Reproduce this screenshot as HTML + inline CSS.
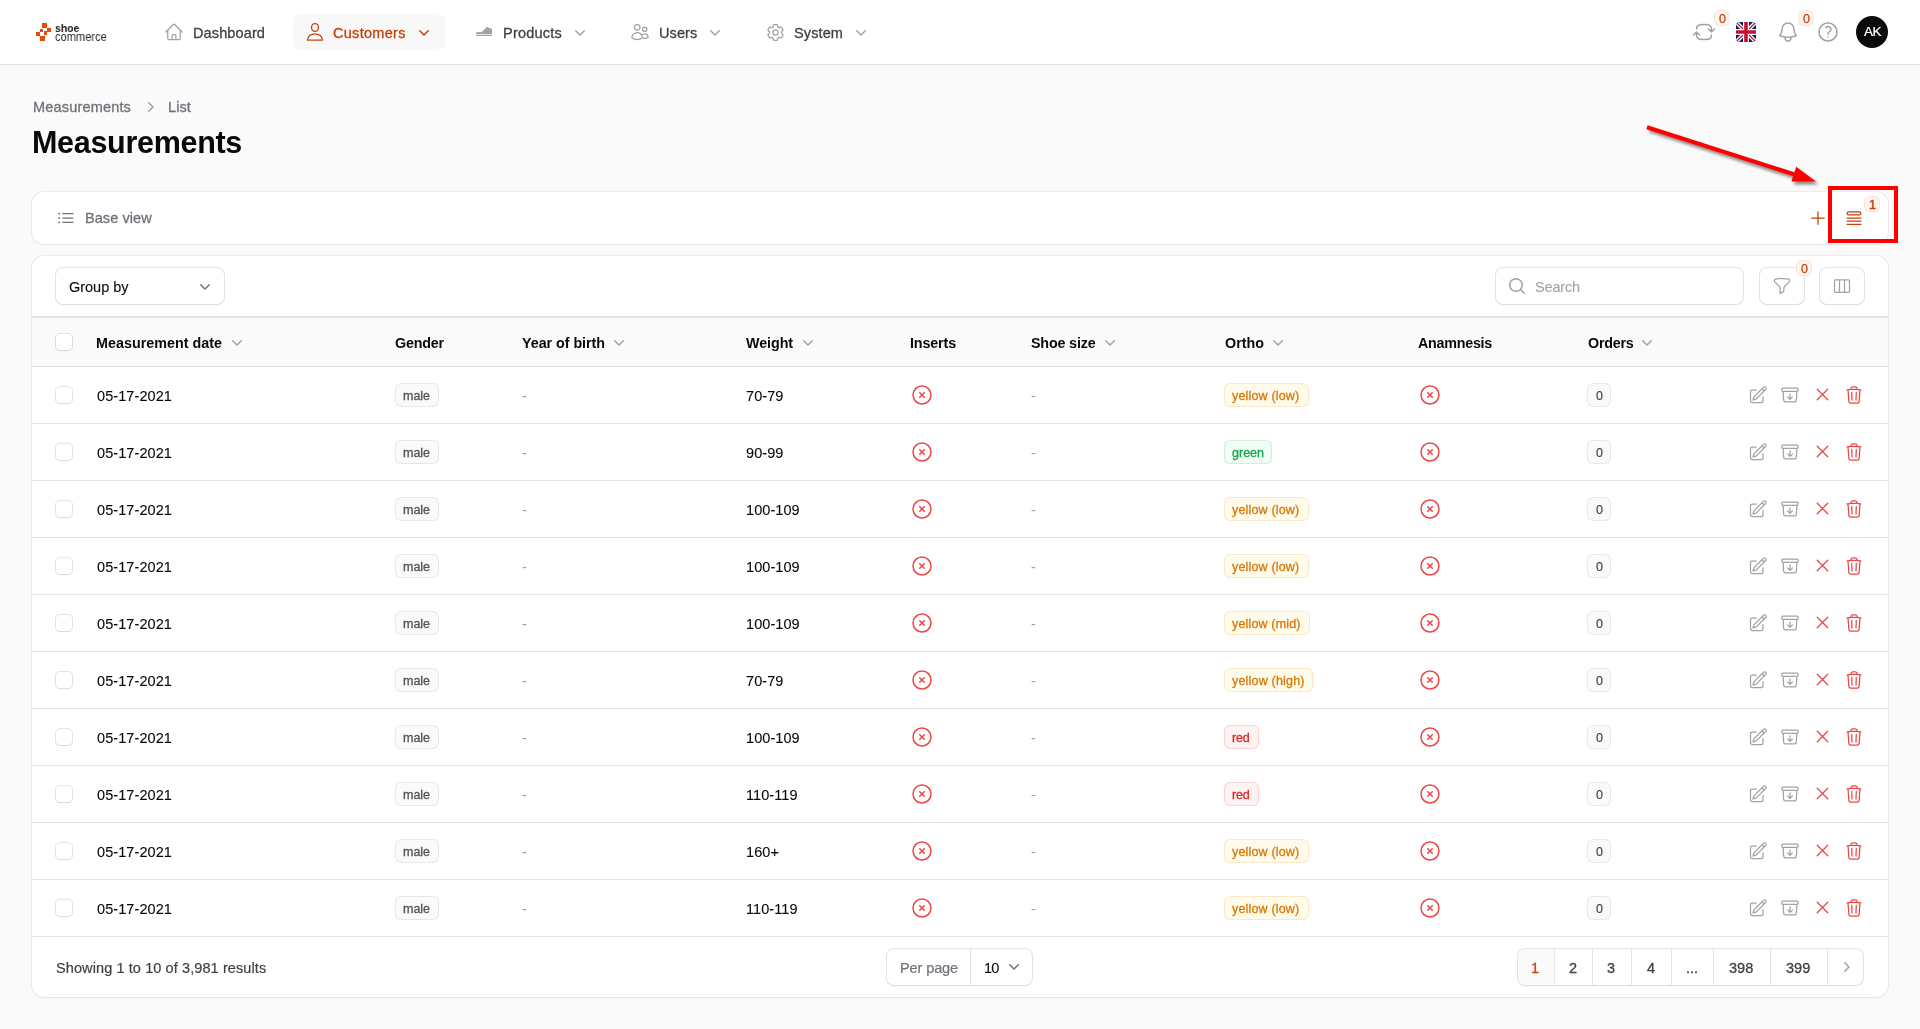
<!DOCTYPE html>
<html><head><meta charset="utf-8"><title>Measurements</title>
<style>
html,body{margin:0;padding:0;}
body{width:1920px;height:1029px;overflow:hidden;background:#fafafa;position:relative;font-family:"Liberation Sans",sans-serif;}
.t{position:absolute;white-space:nowrap;line-height:1;will-change:transform;}
svg{overflow:visible}
</style></head><body>
<div style="position:absolute;left:0px;top:0px;width:1920px;height:64px;background:#fff;"></div>
<div style="position:absolute;left:0px;top:64px;width:1920px;height:1px;background:#e3e3e4;"></div>
<div style="position:absolute;left:0px;top:65px;width:1920px;height:2px;background:linear-gradient(rgba(0,0,0,0.025),rgba(0,0,0,0));"></div>
<div style="position:absolute;left:42.2px;top:23.0px;width:4.9px;height:4.7px;background:#e64b0e"></div>
<div style="position:absolute;left:47.0px;top:27.7px;width:3.9px;height:4.1px;background:#e64b0e"></div>
<div style="position:absolute;left:39.8px;top:29.0px;width:3.0px;height:3.0px;background:#e64b0e"></div>
<div style="position:absolute;left:44.1px;top:31.4px;width:2.9px;height:3.3px;background:#e64b0e"></div>
<div style="position:absolute;left:36.0px;top:31.9px;width:3.9px;height:4.0px;background:#e64b0e"></div>
<div style="position:absolute;left:39.9px;top:35.9px;width:4.9px;height:4.7px;background:#e64b0e"></div>
<div class="t" style="left:55.30px;top:22.08px;font-size:11.6px;font-weight:700;color:#151515;transform:scaleX(0.9013);transform-origin:0 0;">shoe</div>
<div class="t" style="left:55.30px;top:30.00px;font-size:13px;color:#2a2a2a;transform:scaleX(0.8521);transform-origin:0 0;">commerce</div>
<svg style="position:absolute;left:163.5px;top:22px" width="20" height="20" viewBox="0 0 24 24" fill="none" stroke="#a1a1aa" stroke-width="1.5" stroke-linecap="round" stroke-linejoin="round"><path d="m2.25 12 8.954-8.955c.44-.439 1.152-.439 1.591 0L21.75 12M4.5 9.75v10.125c0 .621.504 1.125 1.125 1.125H9.75v-4.875c0-.621.504-1.125 1.125-1.125h2.25c.621 0 1.125.504 1.125 1.125V21h4.125c.621 0 1.125-.504 1.125-1.125V9.75M8.25 21h8.25"/></svg>
<div class="t" style="left:192.50px;top:26.33px;font-size:14.5px;-webkit-text-stroke:0.3px #3f3f46;color:#3f3f46;letter-spacing:0.119px;">Dashboard</div>
<div style="position:absolute;left:293px;top:14px;width:153px;height:36px;background:#f8f8f9;border-radius:8px;"></div>
<svg style="position:absolute;left:300px;top:18px" width="30" height="28" viewBox="300 18 30 28" fill="none" stroke="#c5410c" stroke-width="1.3" stroke-linejoin="round"><ellipse cx="315" cy="27.5" rx="3.45" ry="3.95"/><path d="M307.5 40.2C307.5 36.4 311 33.8 315 33.8S322.5 36.4 322.5 40.2Z"/></svg>
<div class="t" style="left:333.30px;top:26.33px;font-size:14.5px;-webkit-text-stroke:0.3px #c5410c;color:#c5410c;letter-spacing:0.289px;">Customers</div>
<svg style="position:absolute;left:414px;top:21.5px" width="20" height="20" viewBox="0 0 20 20" fill="#c5410c"><path fill-rule="evenodd" clip-rule="evenodd" d="M5.22 8.22a.75.75 0 0 1 1.06 0L10 11.94l3.72-3.72a.75.75 0 1 1 1.06 1.06l-4.25 4.25a.75.75 0 0 1-1.06 0L5.22 9.28a.75.75 0 0 1 0-1.06Z"/></svg>
<svg style="position:absolute;left:470px;top:18px" width="30" height="28" viewBox="470 18 30 28"><path d="M476 33.6C475.9 32.8 476.6 32.1 477.8 32 479.2 31.9 480.1 32.5 481 32.3 482.4 31.2 484.6 29 486.1 27.2 486.3 27 486.6 27 486.9 27.1L491.5 28.7C491.8 28.8 492 29.1 492 29.4V34.1H476Z" fill="#a1a1aa"/><path d="M481.6 30.6l1 1M483.1 29.2l1 1M484.6 27.8l1 1" stroke="#fff" stroke-width=".7"/><rect x="476" y="34.7" width="16" height="1.4" rx=".5" fill="#a1a1aa"/></svg>
<div class="t" style="left:502.80px;top:26.33px;font-size:14.5px;-webkit-text-stroke:0.3px #3f3f46;color:#3f3f46;letter-spacing:0.223px;">Products</div>
<svg style="position:absolute;left:570.4px;top:21.5px" width="20" height="20" viewBox="0 0 20 20" fill="#a1a1aa"><path fill-rule="evenodd" clip-rule="evenodd" d="M5.22 8.22a.75.75 0 0 1 1.06 0L10 11.94l3.72-3.72a.75.75 0 1 1 1.06 1.06l-4.25 4.25a.75.75 0 0 1-1.06 0L5.22 9.28a.75.75 0 0 1 0-1.06Z"/></svg>
<svg style="position:absolute;left:630px;top:22px" width="20" height="20" viewBox="0 0 24 24" fill="none" stroke="#a1a1aa" stroke-width="1.5" stroke-linecap="round" stroke-linejoin="round"><path d="M15 19.128a9.38 9.38 0 0 0 2.625.372 9.337 9.337 0 0 0 4.121-.952 4.125 4.125 0 0 0-7.533-2.493M15 19.128v-.003c0-1.113-.285-2.16-.786-3.07M15 19.128v.106A12.318 12.318 0 0 1 8.624 21c-2.331 0-4.512-.645-6.374-1.766l-.001-.109a6.375 6.375 0 0 1 11.964-3.07M12 6.375a3.375 3.375 0 1 1-6.75 0 3.375 3.375 0 0 1 6.75 0Zm8.25 2.25a2.625 2.625 0 1 1-5.25 0 2.625 2.625 0 0 1 5.25 0Z"/></svg>
<div class="t" style="left:658.50px;top:26.33px;font-size:14.5px;-webkit-text-stroke:0.3px #3f3f46;color:#3f3f46;letter-spacing:0.087px;">Users</div>
<svg style="position:absolute;left:705px;top:21.5px" width="20" height="20" viewBox="0 0 20 20" fill="#a1a1aa"><path fill-rule="evenodd" clip-rule="evenodd" d="M5.22 8.22a.75.75 0 0 1 1.06 0L10 11.94l3.72-3.72a.75.75 0 1 1 1.06 1.06l-4.25 4.25a.75.75 0 0 1-1.06 0L5.22 9.28a.75.75 0 0 1 0-1.06Z"/></svg>
<svg style="position:absolute;left:764.5px;top:22px" width="21" height="21" viewBox="0 0 24 24" fill="none" stroke="#a1a1aa" stroke-width="1.45" stroke-linecap="round" stroke-linejoin="round"><path d="M9.594 3.94c.09-.542.56-.94 1.11-.94h2.593c.55 0 1.02.398 1.11.94l.213 1.281c.063.374.313.686.645.87.074.04.147.083.22.127.325.196.72.257 1.075.124l1.217-.456a1.125 1.125 0 0 1 1.37.49l1.296 2.247a1.125 1.125 0 0 1-.26 1.431l-1.003.827c-.293.241-.438.613-.43.992a7.723 7.723 0 0 1 0 .255c-.008.378.137.75.43.991l1.004.827c.424.35.534.955.26 1.43l-1.298 2.247a1.125 1.125 0 0 1-1.369.491l-1.217-.456c-.355-.133-.75-.072-1.076.124a6.47 6.47 0 0 1-.22.128c-.331.183-.581.495-.644.869l-.213 1.281c-.09.543-.56.94-1.11.94h-2.594c-.55 0-1.019-.398-1.11-.94l-.213-1.281c-.062-.374-.312-.686-.644-.87a6.52 6.52 0 0 1-.22-.127c-.325-.196-.72-.257-1.076-.124l-1.217.456a1.125 1.125 0 0 1-1.369-.49l-1.297-2.247a1.125 1.125 0 0 1 .26-1.431l1.004-.827c.292-.24.437-.613.43-.991a6.932 6.932 0 0 1 0-.255c.007-.38-.138-.751-.43-.992l-1.004-.827a1.125 1.125 0 0 1-.26-1.43l1.297-2.247a1.125 1.125 0 0 1 1.37-.491l1.216.456c.356.133.751.072 1.076-.124.072-.044.146-.086.22-.128.332-.183.582-.495.644-.869l.214-1.28Z M15 12a3 3 0 1 1-6 0 3 3 0 0 1 6 0Z"/></svg>
<div class="t" style="left:793.90px;top:26.33px;font-size:14.5px;-webkit-text-stroke:0.3px #3f3f46;color:#3f3f46;letter-spacing:0.110px;">System</div>
<svg style="position:absolute;left:850.7px;top:21.5px" width="20" height="20" viewBox="0 0 20 20" fill="#a1a1aa"><path fill-rule="evenodd" clip-rule="evenodd" d="M5.22 8.22a.75.75 0 0 1 1.06 0L10 11.94l3.72-3.72a.75.75 0 1 1 1.06 1.06l-4.25 4.25a.75.75 0 0 1-1.06 0L5.22 9.28a.75.75 0 0 1 0-1.06Z"/></svg>
<svg style="position:absolute;left:1692px;top:20px" width="24" height="24" viewBox="0 0 24 24" fill="none" stroke="#a1a1aa" stroke-width="1.5" stroke-linecap="round" stroke-linejoin="round"><path d="M19.5 12c0-1.232-.046-2.453-.138-3.662a4.006 4.006 0 0 0-3.7-3.7 48.678 48.678 0 0 0-7.324 0 4.006 4.006 0 0 0-3.7 3.7c-.017.22-.032.441-.046.662M19.5 12l3-3m-3 3-3-3m-12 3c0 1.232.046 2.453.138 3.662a4.006 4.006 0 0 0 3.7 3.7 48.656 48.656 0 0 0 7.324 0 4.006 4.006 0 0 0 3.7-3.7c.017-.22.032-.441.046-.662M4.5 12l3 3m-3-3-3 3"/></svg>
<div style="position:absolute;left:1714px;top:10px;width:16px;height:16px;background:#fff5ee;border-radius:6px;box-shadow:inset 0 0 0 1px rgba(197,65,12,0.10);"></div>
<div class="t" style="left:1718.52px;top:13.22px;font-size:12.5px;-webkit-text-stroke:0.25px #c5410c;color:#c5410c;">0</div>
<svg style="position:absolute;left:1736px;top:22px" width="20" height="20" viewBox="0 0 20 20"><defs><clipPath id="fc"><rect width="20" height="20" rx="4"/></clipPath></defs><g clip-path="url(#fc)"><rect width="20" height="20" fill="#012169"/><path d="M0 0L20 20M20 0L0 20" stroke="#fff" stroke-width="4"/><path d="M0 0L20 20M20 0L0 20" stroke="#C8102E" stroke-width="1.3"/><path d="M10 0V20M0 10H20" stroke="#fff" stroke-width="6"/><path d="M10 0V20M0 10H20" stroke="#C8102E" stroke-width="3.6"/></g></svg>
<svg style="position:absolute;left:1776px;top:20px" width="24" height="24" viewBox="0 0 24 24" fill="none" stroke="#a1a1aa" stroke-width="1.5" stroke-linecap="round" stroke-linejoin="round"><path d="M14.857 17.082a23.848 23.848 0 0 0 5.454-1.31A8.967 8.967 0 0 1 18 9.75V9A6 6 0 0 0 6 9v.75a8.967 8.967 0 0 1-2.312 6.022c1.733.64 3.56 1.085 5.455 1.31m5.714 0a24.255 24.255 0 0 1-5.714 0m5.714 0a3 3 0 1 1-5.714 0"/></svg>
<div style="position:absolute;left:1798px;top:10px;width:16px;height:16px;background:#fff5ee;border-radius:6px;box-shadow:inset 0 0 0 1px rgba(197,65,12,0.10);"></div>
<div class="t" style="left:1802.52px;top:13.22px;font-size:12.5px;-webkit-text-stroke:0.25px #c5410c;color:#c5410c;">0</div>
<svg style="position:absolute;left:1816px;top:20px" width="24" height="24" viewBox="0 0 24 24" fill="none" stroke="#a1a1aa" stroke-width="1.5" stroke-linecap="round" stroke-linejoin="round"><path d="M9.879 7.519c1.171-1.025 3.071-1.025 4.242 0 1.172 1.025 1.172 2.687 0 3.712-.203.179-.43.326-.67.442-.745.361-1.45.999-1.45 1.827v.75M21 12a9 9 0 1 1-18 0 9 9 0 0 1 18 0Zm-9 5.25h.008v.008H12v-.008Z"/></svg>
<div style="position:absolute;left:1856px;top:16px;width:32px;height:32px;background:#0b0b0d;border-radius:50%;"></div>
<div class="t" style="left:1864.00px;top:25.37px;font-size:13.5px;-webkit-text-stroke:0.2px #fff;color:#fff;letter-spacing:-0.505px;">AK</div>
<div class="t" style="left:32.80px;top:99.63px;font-size:14.5px;-webkit-text-stroke:0.3px #71717a;color:#71717a;letter-spacing:0.176px;">Measurements</div>
<svg style="position:absolute;left:140px;top:96.5px" width="20" height="20" viewBox="0 0 20 20" fill="#a1a1aa"><path fill-rule="evenodd" clip-rule="evenodd" d="M8.22 5.22a.75.75 0 0 1 1.06 0l4.25 4.25a.75.75 0 0 1 0 1.06l-4.25 4.25a.75.75 0 0 1-1.06-1.06L11.94 10 8.22 6.28a.75.75 0 0 1 0-1.06Z"/></svg>
<div class="t" style="left:168.00px;top:99.63px;font-size:14.5px;-webkit-text-stroke:0.3px #71717a;color:#71717a;letter-spacing:0.109px;">List</div>
<div class="t" style="left:32.20px;top:127.08px;font-size:30.5px;font-weight:700;color:#09090b;letter-spacing:-0.298px;">Measurements</div>
<div style="position:absolute;left:32px;top:192px;width:1856px;height:52px;background:#fff;border-radius:12px;box-shadow:0 0 0 1px rgba(9,9,11,0.06),0 1px 2px rgba(0,0,0,0.04);"></div>
<svg style="position:absolute;left:56px;top:208px" width="20" height="20" viewBox="0 0 24 24" fill="none" stroke="#71717a" stroke-width="1.5" stroke-linecap="round" stroke-linejoin="round"><path d="M8.25 6.75h12M8.25 12h12m-12 5.25h12M3.75 6.75h.007v.008H3.75V6.75Zm.375 0a.375.375 0 1 1-.75 0 .375.375 0 0 1 .75 0ZM3.75 12h.007v.008H3.75V12Zm.375 0a.375.375 0 1 1-.75 0 .375.375 0 0 1 .75 0Zm-.375 5.25h.007v.008H3.75v-.008Zm.375 0a.375.375 0 1 1-.75 0 .375.375 0 0 1 .75 0Z"/></svg>
<div class="t" style="left:84.60px;top:211.48px;font-size:14.5px;-webkit-text-stroke:0.3px #71717a;color:#71717a;letter-spacing:0.068px;">Base view</div>
<svg style="position:absolute;left:1808px;top:208px" width="20" height="20" viewBox="0 0 24 24" fill="none" stroke="#c5410c" stroke-width="1.5" stroke-linecap="round" stroke-linejoin="round"><path d="M12 4.5v15m7.5-7.5h-15"/></svg>
<svg style="position:absolute;left:1844px;top:208px" width="20" height="20" viewBox="0 0 24 24" fill="none" stroke="#c5410c" stroke-width="1.5" stroke-linecap="round" stroke-linejoin="round"><path d="M3.75 12h16.5m-16.5 3.75h16.5M3.75 19.5h16.5M5.625 4.5h12.75a1.875 1.875 0 0 1 0 3.75H5.625a1.875 1.875 0 0 1 0-3.75Z"/></svg>
<div style="position:absolute;left:1864px;top:196px;width:16px;height:16px;background:#fff5ee;border-radius:6px;box-shadow:inset 0 0 0 1px rgba(197,65,12,0.10);"></div>
<div class="t" style="left:1868.52px;top:199.22px;font-size:12.5px;-webkit-text-stroke:0.45px #c5410c;color:#c5410c;">1</div>
<div style="position:absolute;left:32px;top:256px;width:1856px;height:741px;background:#fff;border-radius:12px;box-shadow:0 0 0 1px rgba(9,9,11,0.06),0 1px 2px rgba(0,0,0,0.04);overflow:hidden;"></div>
<div style="position:absolute;left:56px;top:268px;width:168px;height:36px;border-radius:7px;background:#fff;box-shadow:0 0 0 1px rgba(9,9,11,0.10),0 1px 2px rgba(0,0,0,0.05);"></div>
<div class="t" style="left:68.60px;top:280.03px;font-size:14.5px;-webkit-text-stroke:0.1px #09090b;color:#09090b;letter-spacing:-0.017px;">Group by</div>
<svg style="position:absolute;left:195px;top:275.5px" width="20" height="20" viewBox="0 0 20 20" fill="#71717a"><path fill-rule="evenodd" clip-rule="evenodd" d="M5.22 8.22a.75.75 0 0 1 1.06 0L10 11.94l3.72-3.72a.75.75 0 1 1 1.06 1.06l-4.25 4.25a.75.75 0 0 1-1.06 0L5.22 9.28a.75.75 0 0 1 0-1.06Z"/></svg>
<div style="position:absolute;left:1496px;top:268px;width:247px;height:36px;border-radius:7px;background:#fff;box-shadow:0 0 0 1px rgba(9,9,11,0.10),0 1px 2px rgba(0,0,0,0.05);"></div>
<svg style="position:absolute;left:1507px;top:276px" width="20" height="20" viewBox="0 0 20 20" fill="#a1a1aa"><path fill-rule="evenodd" clip-rule="evenodd" d="M9 3.5a5.5 5.5 0 1 0 0 11 5.5 5.5 0 0 0 0-11ZM2 9a7 7 0 1 1 12.452 4.391l3.328 3.329a.75.75 0 1 1-1.06 1.06l-3.329-3.328A7 7 0 0 1 2 9Z"/></svg>
<div class="t" style="left:1535.20px;top:280.03px;font-size:14.5px;-webkit-text-stroke:0.1px #a1a1aa;color:#a1a1aa;letter-spacing:-0.157px;">Search</div>
<div style="position:absolute;left:1760px;top:268px;width:44px;height:36px;border-radius:7px;background:#fff;box-shadow:0 0 0 1px rgba(9,9,11,0.10),0 1px 2px rgba(0,0,0,0.05);"></div>
<svg style="position:absolute;left:1772px;top:276px" width="20" height="20" viewBox="0 0 24 24" fill="none" stroke="#a1a1aa" stroke-width="1.5" stroke-linecap="round" stroke-linejoin="round"><path d="M12 3c2.755 0 5.455.232 8.083.678.533.09.917.556.917 1.096v1.044a2.25 2.25 0 0 1-.659 1.591l-5.432 5.432a2.25 2.25 0 0 0-.659 1.591v2.927a2.25 2.25 0 0 1-1.244 2.013L9.75 21v-6.568a2.25 2.25 0 0 0-.659-1.591L3.659 7.409A2.25 2.25 0 0 1 3 5.818V4.774c0-.54.384-1.006.917-1.096A48.32 48.32 0 0 1 12 3Z"/></svg>
<div style="position:absolute;left:1796px;top:260px;width:16px;height:16px;background:#fff5ee;border-radius:6px;box-shadow:inset 0 0 0 1px rgba(197,65,12,0.10);"></div>
<div class="t" style="left:1800.52px;top:263.22px;font-size:12.5px;-webkit-text-stroke:0.25px #c5410c;color:#c5410c;">0</div>
<div style="position:absolute;left:1820px;top:268px;width:44px;height:36px;border-radius:7px;background:#fff;box-shadow:0 0 0 1px rgba(9,9,11,0.10),0 1px 2px rgba(0,0,0,0.05);"></div>
<svg style="position:absolute;left:1832px;top:276px" width="20" height="20" viewBox="0 0 24 24" fill="none" stroke="#a1a1aa" stroke-width="1.5" stroke-linecap="round" stroke-linejoin="round"><path d="M9 4.5v15m6-15v15m-10.875 0h15.75c.621 0 1.125-.504 1.125-1.125V5.625c0-.621-.504-1.125-1.125-1.125H4.125C3.504 4.5 3 5.004 3 5.625v12.75c0 .621.504 1.125 1.125 1.125Z"/></svg>
<div style="position:absolute;left:32px;top:316px;width:1856px;height:2px;background:#e4e4e7;"></div>
<div style="position:absolute;left:32px;top:318px;width:1856px;height:48px;background:#fafafa;"></div>
<div style="position:absolute;left:32px;top:366px;width:1856px;height:1px;background:#e4e4e7;"></div>
<div style="position:absolute;left:56px;top:334px;width:16px;height:16px;border-radius:4px;background:#fff;box-shadow:0 0 0 1px rgba(9,9,11,0.11),0 1px 2px rgba(0,0,0,0.05);"></div>
<div class="t" style="left:96.40px;top:335.80px;font-size:14.3px;font-weight:700;color:#09090b;letter-spacing:0.028px;">Measurement date</div>
<svg style="position:absolute;left:226.6px;top:331.7px" width="20" height="20" viewBox="0 0 20 20" fill="#a1a1aa"><path fill-rule="evenodd" clip-rule="evenodd" d="M5.22 8.22a.75.75 0 0 1 1.06 0L10 11.94l3.72-3.72a.75.75 0 1 1 1.06 1.06l-4.25 4.25a.75.75 0 0 1-1.06 0L5.22 9.28a.75.75 0 0 1 0-1.06Z"/></svg>
<div class="t" style="left:395.20px;top:335.80px;font-size:14.3px;font-weight:700;color:#09090b;letter-spacing:-0.177px;">Gender</div>
<div class="t" style="left:521.80px;top:335.80px;font-size:14.3px;font-weight:700;color:#09090b;letter-spacing:-0.033px;">Year of birth</div>
<svg style="position:absolute;left:609.4px;top:331.7px" width="20" height="20" viewBox="0 0 20 20" fill="#a1a1aa"><path fill-rule="evenodd" clip-rule="evenodd" d="M5.22 8.22a.75.75 0 0 1 1.06 0L10 11.94l3.72-3.72a.75.75 0 1 1 1.06 1.06l-4.25 4.25a.75.75 0 0 1-1.06 0L5.22 9.28a.75.75 0 0 1 0-1.06Z"/></svg>
<div class="t" style="left:746.30px;top:335.80px;font-size:14.3px;font-weight:700;color:#09090b;letter-spacing:-0.066px;">Weight</div>
<svg style="position:absolute;left:798px;top:331.7px" width="20" height="20" viewBox="0 0 20 20" fill="#a1a1aa"><path fill-rule="evenodd" clip-rule="evenodd" d="M5.22 8.22a.75.75 0 0 1 1.06 0L10 11.94l3.72-3.72a.75.75 0 1 1 1.06 1.06l-4.25 4.25a.75.75 0 0 1-1.06 0L5.22 9.28a.75.75 0 0 1 0-1.06Z"/></svg>
<div class="t" style="left:909.80px;top:335.80px;font-size:14.3px;font-weight:700;color:#09090b;letter-spacing:-0.127px;">Inserts</div>
<div class="t" style="left:1031.20px;top:335.80px;font-size:14.3px;font-weight:700;color:#09090b;letter-spacing:-0.162px;">Shoe size</div>
<svg style="position:absolute;left:1100px;top:331.7px" width="20" height="20" viewBox="0 0 20 20" fill="#a1a1aa"><path fill-rule="evenodd" clip-rule="evenodd" d="M5.22 8.22a.75.75 0 0 1 1.06 0L10 11.94l3.72-3.72a.75.75 0 1 1 1.06 1.06l-4.25 4.25a.75.75 0 0 1-1.06 0L5.22 9.28a.75.75 0 0 1 0-1.06Z"/></svg>
<div class="t" style="left:1224.60px;top:335.80px;font-size:14.3px;font-weight:700;color:#09090b;letter-spacing:0.016px;">Ortho</div>
<svg style="position:absolute;left:1267.6px;top:331.7px" width="20" height="20" viewBox="0 0 20 20" fill="#a1a1aa"><path fill-rule="evenodd" clip-rule="evenodd" d="M5.22 8.22a.75.75 0 0 1 1.06 0L10 11.94l3.72-3.72a.75.75 0 1 1 1.06 1.06l-4.25 4.25a.75.75 0 0 1-1.06 0L5.22 9.28a.75.75 0 0 1 0-1.06Z"/></svg>
<div class="t" style="left:1418.40px;top:335.80px;font-size:14.3px;font-weight:700;color:#09090b;letter-spacing:-0.255px;">Anamnesis</div>
<div class="t" style="left:1587.50px;top:335.80px;font-size:14.3px;font-weight:700;color:#09090b;letter-spacing:-0.215px;">Orders</div>
<svg style="position:absolute;left:1637px;top:331.7px" width="20" height="20" viewBox="0 0 20 20" fill="#a1a1aa"><path fill-rule="evenodd" clip-rule="evenodd" d="M5.22 8.22a.75.75 0 0 1 1.06 0L10 11.94l3.72-3.72a.75.75 0 1 1 1.06 1.06l-4.25 4.25a.75.75 0 0 1-1.06 0L5.22 9.28a.75.75 0 0 1 0-1.06Z"/></svg>
<div style="position:absolute;left:32px;top:423px;width:1856px;height:1px;background:#e4e4e7;"></div>
<div style="position:absolute;left:56px;top:387px;width:16px;height:16px;border-radius:4px;background:#fff;box-shadow:0 0 0 1px rgba(9,9,11,0.11),0 1px 2px rgba(0,0,0,0.05);"></div>
<div class="t" style="left:96.50px;top:388.83px;font-size:14.5px;-webkit-text-stroke:0.1px #09090b;color:#09090b;letter-spacing:0.084px;">05-17-2021</div>
<div style="position:absolute;left:395px;top:383px;width:44px;height:24px;background:#fafafa;border-radius:6px;box-shadow:inset 0 0 0 1px rgba(82,82,91,0.10);"></div>
<div class="t" style="left:403.20px;top:389.62px;font-size:12.5px;-webkit-text-stroke:0.3px #52525b;color:#52525b;letter-spacing:-0.023px;">male</div>
<div class="t" style="left:522.00px;top:388.73px;font-size:14.5px;color:#a1a1aa;">-</div>
<div class="t" style="left:746.30px;top:388.83px;font-size:14.5px;-webkit-text-stroke:0.1px #09090b;color:#09090b;letter-spacing:0.066px;">70-79</div>
<svg style="position:absolute;left:910px;top:383px" width="24" height="24" viewBox="0 0 24 24" fill="none" stroke="#ef4444" stroke-width="1.5" stroke-linecap="round" stroke-linejoin="round"><path d="m9.75 9.75 4.5 4.5m0-4.5-4.5 4.5M21 12a9 9 0 1 1-18 0 9 9 0 0 1 18 0Z"/></svg>
<div class="t" style="left:1031.00px;top:388.73px;font-size:14.5px;color:#a1a1aa;">-</div>
<div style="position:absolute;left:1224px;top:383px;width:85px;height:24px;background:#fffbeb;border-radius:6px;box-shadow:inset 0 0 0 1px rgba(217,119,6,0.14);"></div>
<div class="t" style="left:1232.40px;top:389.62px;font-size:12.5px;-webkit-text-stroke:0.3px #d97706;color:#d97706;letter-spacing:0.176px;">yellow (low)</div>
<svg style="position:absolute;left:1418px;top:383px" width="24" height="24" viewBox="0 0 24 24" fill="none" stroke="#ef4444" stroke-width="1.5" stroke-linecap="round" stroke-linejoin="round"><path d="m9.75 9.75 4.5 4.5m0-4.5-4.5 4.5M21 12a9 9 0 1 1-18 0 9 9 0 0 1 18 0Z"/></svg>
<div style="position:absolute;left:1587px;top:383px;width:24px;height:24px;background:#fafafa;border-radius:6px;box-shadow:inset 0 0 0 1px rgba(82,82,91,0.10);"></div>
<div class="t" style="left:1595.52px;top:389.62px;font-size:12.5px;-webkit-text-stroke:0.15px #3f3f46;color:#3f3f46;">0</div>
<svg style="position:absolute;left:1748px;top:384.5px" width="20" height="20" viewBox="0 0 24 24" fill="none" stroke="#a1a1aa" stroke-width="1.5" stroke-linecap="round" stroke-linejoin="round"><path d="m16.862 4.487 1.687-1.688a1.875 1.875 0 1 1 2.652 2.652L10.582 16.07a4.5 4.5 0 0 1-1.897 1.13L6 18l.8-2.685a4.5 4.5 0 0 1 1.13-1.897l8.932-8.931Zm0 0L19.5 7.125M18 14v4.75A2.25 2.25 0 0 1 15.75 21H5.25A2.25 2.25 0 0 1 3 18.75V8.25A2.25 2.25 0 0 1 5.25 6H10"/></svg>
<svg style="position:absolute;left:1780px;top:384.5px" width="20" height="20" viewBox="0 0 24 24" fill="none" stroke="#a1a1aa" stroke-width="1.5" stroke-linecap="round" stroke-linejoin="round"><path d="m20.25 7.5-.625 10.632a2.25 2.25 0 0 1-2.247 2.118H6.622a2.25 2.25 0 0 1-2.247-2.118L3.75 7.5m8.25 3v6.75m0 0-3-3m3 3 3-3M3.375 7.5h17.25c.621 0 1.125-.504 1.125-1.125v-1.5c0-.621-.504-1.125-1.125-1.125H3.375c-.621 0-1.125.504-1.125 1.125v1.5c0 .621.504 1.125 1.125 1.125Z"/></svg>
<svg style="position:absolute;left:1811.5px;top:384.3px" width="21" height="21" viewBox="0 0 24 24" fill="none" stroke="#ef4444" stroke-width="1.5" stroke-linecap="round" stroke-linejoin="round"><path d="M6 18 18 6M6 6l12 12"/></svg>
<svg style="position:absolute;left:1844px;top:384.5px" width="20" height="20" viewBox="0 0 24 24" fill="none" stroke="#ef4444" stroke-width="1.5" stroke-linecap="round" stroke-linejoin="round"><path d="m14.74 9-.346 9m-4.788 0L9.26 9m9.968-3.21c.342.052.682.107 1.022.166m-1.022-.165L18.16 19.673a2.25 2.25 0 0 1-2.244 2.077H8.084a2.25 2.25 0 0 1-2.244-2.077L4.772 5.79m14.456 0a48.108 48.108 0 0 0-3.478-.397m-12 .562c.34-.059.68-.114 1.022-.165m0 0a48.11 48.11 0 0 1 3.478-.397m7.5 0v-.916c0-1.18-.91-2.164-2.09-2.201a51.964 51.964 0 0 0-3.32 0c-1.18.037-2.09 1.022-2.09 2.201v.916m7.5 0a48.667 48.667 0 0 0-7.5 0"/></svg>
<div style="position:absolute;left:32px;top:480px;width:1856px;height:1px;background:#e4e4e7;"></div>
<div style="position:absolute;left:56px;top:444px;width:16px;height:16px;border-radius:4px;background:#fff;box-shadow:0 0 0 1px rgba(9,9,11,0.11),0 1px 2px rgba(0,0,0,0.05);"></div>
<div class="t" style="left:96.50px;top:445.83px;font-size:14.5px;-webkit-text-stroke:0.1px #09090b;color:#09090b;letter-spacing:0.084px;">05-17-2021</div>
<div style="position:absolute;left:395px;top:440px;width:44px;height:24px;background:#fafafa;border-radius:6px;box-shadow:inset 0 0 0 1px rgba(82,82,91,0.10);"></div>
<div class="t" style="left:403.20px;top:446.62px;font-size:12.5px;-webkit-text-stroke:0.3px #52525b;color:#52525b;letter-spacing:-0.023px;">male</div>
<div class="t" style="left:522.00px;top:445.73px;font-size:14.5px;color:#a1a1aa;">-</div>
<div class="t" style="left:746.30px;top:445.83px;font-size:14.5px;-webkit-text-stroke:0.1px #09090b;color:#09090b;letter-spacing:0.066px;">90-99</div>
<svg style="position:absolute;left:910px;top:440px" width="24" height="24" viewBox="0 0 24 24" fill="none" stroke="#ef4444" stroke-width="1.5" stroke-linecap="round" stroke-linejoin="round"><path d="m9.75 9.75 4.5 4.5m0-4.5-4.5 4.5M21 12a9 9 0 1 1-18 0 9 9 0 0 1 18 0Z"/></svg>
<div class="t" style="left:1031.00px;top:445.73px;font-size:14.5px;color:#a1a1aa;">-</div>
<div style="position:absolute;left:1224px;top:440px;width:48px;height:24px;background:#f0fdf4;border-radius:6px;box-shadow:inset 0 0 0 1px rgba(22,163,74,0.14);"></div>
<div class="t" style="left:1232.40px;top:446.62px;font-size:12.5px;-webkit-text-stroke:0.3px #16a34a;color:#16a34a;letter-spacing:0.007px;">green</div>
<svg style="position:absolute;left:1418px;top:440px" width="24" height="24" viewBox="0 0 24 24" fill="none" stroke="#ef4444" stroke-width="1.5" stroke-linecap="round" stroke-linejoin="round"><path d="m9.75 9.75 4.5 4.5m0-4.5-4.5 4.5M21 12a9 9 0 1 1-18 0 9 9 0 0 1 18 0Z"/></svg>
<div style="position:absolute;left:1587px;top:440px;width:24px;height:24px;background:#fafafa;border-radius:6px;box-shadow:inset 0 0 0 1px rgba(82,82,91,0.10);"></div>
<div class="t" style="left:1595.52px;top:446.62px;font-size:12.5px;-webkit-text-stroke:0.15px #3f3f46;color:#3f3f46;">0</div>
<svg style="position:absolute;left:1748px;top:441.5px" width="20" height="20" viewBox="0 0 24 24" fill="none" stroke="#a1a1aa" stroke-width="1.5" stroke-linecap="round" stroke-linejoin="round"><path d="m16.862 4.487 1.687-1.688a1.875 1.875 0 1 1 2.652 2.652L10.582 16.07a4.5 4.5 0 0 1-1.897 1.13L6 18l.8-2.685a4.5 4.5 0 0 1 1.13-1.897l8.932-8.931Zm0 0L19.5 7.125M18 14v4.75A2.25 2.25 0 0 1 15.75 21H5.25A2.25 2.25 0 0 1 3 18.75V8.25A2.25 2.25 0 0 1 5.25 6H10"/></svg>
<svg style="position:absolute;left:1780px;top:441.5px" width="20" height="20" viewBox="0 0 24 24" fill="none" stroke="#a1a1aa" stroke-width="1.5" stroke-linecap="round" stroke-linejoin="round"><path d="m20.25 7.5-.625 10.632a2.25 2.25 0 0 1-2.247 2.118H6.622a2.25 2.25 0 0 1-2.247-2.118L3.75 7.5m8.25 3v6.75m0 0-3-3m3 3 3-3M3.375 7.5h17.25c.621 0 1.125-.504 1.125-1.125v-1.5c0-.621-.504-1.125-1.125-1.125H3.375c-.621 0-1.125.504-1.125 1.125v1.5c0 .621.504 1.125 1.125 1.125Z"/></svg>
<svg style="position:absolute;left:1811.5px;top:441.3px" width="21" height="21" viewBox="0 0 24 24" fill="none" stroke="#ef4444" stroke-width="1.5" stroke-linecap="round" stroke-linejoin="round"><path d="M6 18 18 6M6 6l12 12"/></svg>
<svg style="position:absolute;left:1844px;top:441.5px" width="20" height="20" viewBox="0 0 24 24" fill="none" stroke="#ef4444" stroke-width="1.5" stroke-linecap="round" stroke-linejoin="round"><path d="m14.74 9-.346 9m-4.788 0L9.26 9m9.968-3.21c.342.052.682.107 1.022.166m-1.022-.165L18.16 19.673a2.25 2.25 0 0 1-2.244 2.077H8.084a2.25 2.25 0 0 1-2.244-2.077L4.772 5.79m14.456 0a48.108 48.108 0 0 0-3.478-.397m-12 .562c.34-.059.68-.114 1.022-.165m0 0a48.11 48.11 0 0 1 3.478-.397m7.5 0v-.916c0-1.18-.91-2.164-2.09-2.201a51.964 51.964 0 0 0-3.32 0c-1.18.037-2.09 1.022-2.09 2.201v.916m7.5 0a48.667 48.667 0 0 0-7.5 0"/></svg>
<div style="position:absolute;left:32px;top:537px;width:1856px;height:1px;background:#e4e4e7;"></div>
<div style="position:absolute;left:56px;top:501px;width:16px;height:16px;border-radius:4px;background:#fff;box-shadow:0 0 0 1px rgba(9,9,11,0.11),0 1px 2px rgba(0,0,0,0.05);"></div>
<div class="t" style="left:96.50px;top:502.83px;font-size:14.5px;-webkit-text-stroke:0.1px #09090b;color:#09090b;letter-spacing:0.084px;">05-17-2021</div>
<div style="position:absolute;left:395px;top:497px;width:44px;height:24px;background:#fafafa;border-radius:6px;box-shadow:inset 0 0 0 1px rgba(82,82,91,0.10);"></div>
<div class="t" style="left:403.20px;top:503.62px;font-size:12.5px;-webkit-text-stroke:0.3px #52525b;color:#52525b;letter-spacing:-0.023px;">male</div>
<div class="t" style="left:522.00px;top:502.73px;font-size:14.5px;color:#a1a1aa;">-</div>
<div class="t" style="left:746.30px;top:502.83px;font-size:14.5px;-webkit-text-stroke:0.1px #09090b;color:#09090b;letter-spacing:0.068px;">100-109</div>
<svg style="position:absolute;left:910px;top:497px" width="24" height="24" viewBox="0 0 24 24" fill="none" stroke="#ef4444" stroke-width="1.5" stroke-linecap="round" stroke-linejoin="round"><path d="m9.75 9.75 4.5 4.5m0-4.5-4.5 4.5M21 12a9 9 0 1 1-18 0 9 9 0 0 1 18 0Z"/></svg>
<div class="t" style="left:1031.00px;top:502.73px;font-size:14.5px;color:#a1a1aa;">-</div>
<div style="position:absolute;left:1224px;top:497px;width:85px;height:24px;background:#fffbeb;border-radius:6px;box-shadow:inset 0 0 0 1px rgba(217,119,6,0.14);"></div>
<div class="t" style="left:1232.40px;top:503.62px;font-size:12.5px;-webkit-text-stroke:0.3px #d97706;color:#d97706;letter-spacing:0.176px;">yellow (low)</div>
<svg style="position:absolute;left:1418px;top:497px" width="24" height="24" viewBox="0 0 24 24" fill="none" stroke="#ef4444" stroke-width="1.5" stroke-linecap="round" stroke-linejoin="round"><path d="m9.75 9.75 4.5 4.5m0-4.5-4.5 4.5M21 12a9 9 0 1 1-18 0 9 9 0 0 1 18 0Z"/></svg>
<div style="position:absolute;left:1587px;top:497px;width:24px;height:24px;background:#fafafa;border-radius:6px;box-shadow:inset 0 0 0 1px rgba(82,82,91,0.10);"></div>
<div class="t" style="left:1595.52px;top:503.62px;font-size:12.5px;-webkit-text-stroke:0.15px #3f3f46;color:#3f3f46;">0</div>
<svg style="position:absolute;left:1748px;top:498.5px" width="20" height="20" viewBox="0 0 24 24" fill="none" stroke="#a1a1aa" stroke-width="1.5" stroke-linecap="round" stroke-linejoin="round"><path d="m16.862 4.487 1.687-1.688a1.875 1.875 0 1 1 2.652 2.652L10.582 16.07a4.5 4.5 0 0 1-1.897 1.13L6 18l.8-2.685a4.5 4.5 0 0 1 1.13-1.897l8.932-8.931Zm0 0L19.5 7.125M18 14v4.75A2.25 2.25 0 0 1 15.75 21H5.25A2.25 2.25 0 0 1 3 18.75V8.25A2.25 2.25 0 0 1 5.25 6H10"/></svg>
<svg style="position:absolute;left:1780px;top:498.5px" width="20" height="20" viewBox="0 0 24 24" fill="none" stroke="#a1a1aa" stroke-width="1.5" stroke-linecap="round" stroke-linejoin="round"><path d="m20.25 7.5-.625 10.632a2.25 2.25 0 0 1-2.247 2.118H6.622a2.25 2.25 0 0 1-2.247-2.118L3.75 7.5m8.25 3v6.75m0 0-3-3m3 3 3-3M3.375 7.5h17.25c.621 0 1.125-.504 1.125-1.125v-1.5c0-.621-.504-1.125-1.125-1.125H3.375c-.621 0-1.125.504-1.125 1.125v1.5c0 .621.504 1.125 1.125 1.125Z"/></svg>
<svg style="position:absolute;left:1811.5px;top:498.3px" width="21" height="21" viewBox="0 0 24 24" fill="none" stroke="#ef4444" stroke-width="1.5" stroke-linecap="round" stroke-linejoin="round"><path d="M6 18 18 6M6 6l12 12"/></svg>
<svg style="position:absolute;left:1844px;top:498.5px" width="20" height="20" viewBox="0 0 24 24" fill="none" stroke="#ef4444" stroke-width="1.5" stroke-linecap="round" stroke-linejoin="round"><path d="m14.74 9-.346 9m-4.788 0L9.26 9m9.968-3.21c.342.052.682.107 1.022.166m-1.022-.165L18.16 19.673a2.25 2.25 0 0 1-2.244 2.077H8.084a2.25 2.25 0 0 1-2.244-2.077L4.772 5.79m14.456 0a48.108 48.108 0 0 0-3.478-.397m-12 .562c.34-.059.68-.114 1.022-.165m0 0a48.11 48.11 0 0 1 3.478-.397m7.5 0v-.916c0-1.18-.91-2.164-2.09-2.201a51.964 51.964 0 0 0-3.32 0c-1.18.037-2.09 1.022-2.09 2.201v.916m7.5 0a48.667 48.667 0 0 0-7.5 0"/></svg>
<div style="position:absolute;left:32px;top:594px;width:1856px;height:1px;background:#e4e4e7;"></div>
<div style="position:absolute;left:56px;top:558px;width:16px;height:16px;border-radius:4px;background:#fff;box-shadow:0 0 0 1px rgba(9,9,11,0.11),0 1px 2px rgba(0,0,0,0.05);"></div>
<div class="t" style="left:96.50px;top:559.83px;font-size:14.5px;-webkit-text-stroke:0.1px #09090b;color:#09090b;letter-spacing:0.084px;">05-17-2021</div>
<div style="position:absolute;left:395px;top:554px;width:44px;height:24px;background:#fafafa;border-radius:6px;box-shadow:inset 0 0 0 1px rgba(82,82,91,0.10);"></div>
<div class="t" style="left:403.20px;top:560.62px;font-size:12.5px;-webkit-text-stroke:0.3px #52525b;color:#52525b;letter-spacing:-0.023px;">male</div>
<div class="t" style="left:522.00px;top:559.73px;font-size:14.5px;color:#a1a1aa;">-</div>
<div class="t" style="left:746.30px;top:559.83px;font-size:14.5px;-webkit-text-stroke:0.1px #09090b;color:#09090b;letter-spacing:0.068px;">100-109</div>
<svg style="position:absolute;left:910px;top:554px" width="24" height="24" viewBox="0 0 24 24" fill="none" stroke="#ef4444" stroke-width="1.5" stroke-linecap="round" stroke-linejoin="round"><path d="m9.75 9.75 4.5 4.5m0-4.5-4.5 4.5M21 12a9 9 0 1 1-18 0 9 9 0 0 1 18 0Z"/></svg>
<div class="t" style="left:1031.00px;top:559.73px;font-size:14.5px;color:#a1a1aa;">-</div>
<div style="position:absolute;left:1224px;top:554px;width:85px;height:24px;background:#fffbeb;border-radius:6px;box-shadow:inset 0 0 0 1px rgba(217,119,6,0.14);"></div>
<div class="t" style="left:1232.40px;top:560.62px;font-size:12.5px;-webkit-text-stroke:0.3px #d97706;color:#d97706;letter-spacing:0.176px;">yellow (low)</div>
<svg style="position:absolute;left:1418px;top:554px" width="24" height="24" viewBox="0 0 24 24" fill="none" stroke="#ef4444" stroke-width="1.5" stroke-linecap="round" stroke-linejoin="round"><path d="m9.75 9.75 4.5 4.5m0-4.5-4.5 4.5M21 12a9 9 0 1 1-18 0 9 9 0 0 1 18 0Z"/></svg>
<div style="position:absolute;left:1587px;top:554px;width:24px;height:24px;background:#fafafa;border-radius:6px;box-shadow:inset 0 0 0 1px rgba(82,82,91,0.10);"></div>
<div class="t" style="left:1595.52px;top:560.62px;font-size:12.5px;-webkit-text-stroke:0.15px #3f3f46;color:#3f3f46;">0</div>
<svg style="position:absolute;left:1748px;top:555.5px" width="20" height="20" viewBox="0 0 24 24" fill="none" stroke="#a1a1aa" stroke-width="1.5" stroke-linecap="round" stroke-linejoin="round"><path d="m16.862 4.487 1.687-1.688a1.875 1.875 0 1 1 2.652 2.652L10.582 16.07a4.5 4.5 0 0 1-1.897 1.13L6 18l.8-2.685a4.5 4.5 0 0 1 1.13-1.897l8.932-8.931Zm0 0L19.5 7.125M18 14v4.75A2.25 2.25 0 0 1 15.75 21H5.25A2.25 2.25 0 0 1 3 18.75V8.25A2.25 2.25 0 0 1 5.25 6H10"/></svg>
<svg style="position:absolute;left:1780px;top:555.5px" width="20" height="20" viewBox="0 0 24 24" fill="none" stroke="#a1a1aa" stroke-width="1.5" stroke-linecap="round" stroke-linejoin="round"><path d="m20.25 7.5-.625 10.632a2.25 2.25 0 0 1-2.247 2.118H6.622a2.25 2.25 0 0 1-2.247-2.118L3.75 7.5m8.25 3v6.75m0 0-3-3m3 3 3-3M3.375 7.5h17.25c.621 0 1.125-.504 1.125-1.125v-1.5c0-.621-.504-1.125-1.125-1.125H3.375c-.621 0-1.125.504-1.125 1.125v1.5c0 .621.504 1.125 1.125 1.125Z"/></svg>
<svg style="position:absolute;left:1811.5px;top:555.3px" width="21" height="21" viewBox="0 0 24 24" fill="none" stroke="#ef4444" stroke-width="1.5" stroke-linecap="round" stroke-linejoin="round"><path d="M6 18 18 6M6 6l12 12"/></svg>
<svg style="position:absolute;left:1844px;top:555.5px" width="20" height="20" viewBox="0 0 24 24" fill="none" stroke="#ef4444" stroke-width="1.5" stroke-linecap="round" stroke-linejoin="round"><path d="m14.74 9-.346 9m-4.788 0L9.26 9m9.968-3.21c.342.052.682.107 1.022.166m-1.022-.165L18.16 19.673a2.25 2.25 0 0 1-2.244 2.077H8.084a2.25 2.25 0 0 1-2.244-2.077L4.772 5.79m14.456 0a48.108 48.108 0 0 0-3.478-.397m-12 .562c.34-.059.68-.114 1.022-.165m0 0a48.11 48.11 0 0 1 3.478-.397m7.5 0v-.916c0-1.18-.91-2.164-2.09-2.201a51.964 51.964 0 0 0-3.32 0c-1.18.037-2.09 1.022-2.09 2.201v.916m7.5 0a48.667 48.667 0 0 0-7.5 0"/></svg>
<div style="position:absolute;left:32px;top:651px;width:1856px;height:1px;background:#e4e4e7;"></div>
<div style="position:absolute;left:56px;top:615px;width:16px;height:16px;border-radius:4px;background:#fff;box-shadow:0 0 0 1px rgba(9,9,11,0.11),0 1px 2px rgba(0,0,0,0.05);"></div>
<div class="t" style="left:96.50px;top:616.83px;font-size:14.5px;-webkit-text-stroke:0.1px #09090b;color:#09090b;letter-spacing:0.084px;">05-17-2021</div>
<div style="position:absolute;left:395px;top:611px;width:44px;height:24px;background:#fafafa;border-radius:6px;box-shadow:inset 0 0 0 1px rgba(82,82,91,0.10);"></div>
<div class="t" style="left:403.20px;top:617.62px;font-size:12.5px;-webkit-text-stroke:0.3px #52525b;color:#52525b;letter-spacing:-0.023px;">male</div>
<div class="t" style="left:522.00px;top:616.73px;font-size:14.5px;color:#a1a1aa;">-</div>
<div class="t" style="left:746.30px;top:616.83px;font-size:14.5px;-webkit-text-stroke:0.1px #09090b;color:#09090b;letter-spacing:0.068px;">100-109</div>
<svg style="position:absolute;left:910px;top:611px" width="24" height="24" viewBox="0 0 24 24" fill="none" stroke="#ef4444" stroke-width="1.5" stroke-linecap="round" stroke-linejoin="round"><path d="m9.75 9.75 4.5 4.5m0-4.5-4.5 4.5M21 12a9 9 0 1 1-18 0 9 9 0 0 1 18 0Z"/></svg>
<div class="t" style="left:1031.00px;top:616.73px;font-size:14.5px;color:#a1a1aa;">-</div>
<div style="position:absolute;left:1224px;top:611px;width:85.5px;height:24px;background:#fffbeb;border-radius:6px;box-shadow:inset 0 0 0 1px rgba(217,119,6,0.14);"></div>
<div class="t" style="left:1232.40px;top:617.62px;font-size:12.5px;-webkit-text-stroke:0.3px #d97706;color:#d97706;letter-spacing:0.161px;">yellow (mid)</div>
<svg style="position:absolute;left:1418px;top:611px" width="24" height="24" viewBox="0 0 24 24" fill="none" stroke="#ef4444" stroke-width="1.5" stroke-linecap="round" stroke-linejoin="round"><path d="m9.75 9.75 4.5 4.5m0-4.5-4.5 4.5M21 12a9 9 0 1 1-18 0 9 9 0 0 1 18 0Z"/></svg>
<div style="position:absolute;left:1587px;top:611px;width:24px;height:24px;background:#fafafa;border-radius:6px;box-shadow:inset 0 0 0 1px rgba(82,82,91,0.10);"></div>
<div class="t" style="left:1595.52px;top:617.62px;font-size:12.5px;-webkit-text-stroke:0.15px #3f3f46;color:#3f3f46;">0</div>
<svg style="position:absolute;left:1748px;top:612.5px" width="20" height="20" viewBox="0 0 24 24" fill="none" stroke="#a1a1aa" stroke-width="1.5" stroke-linecap="round" stroke-linejoin="round"><path d="m16.862 4.487 1.687-1.688a1.875 1.875 0 1 1 2.652 2.652L10.582 16.07a4.5 4.5 0 0 1-1.897 1.13L6 18l.8-2.685a4.5 4.5 0 0 1 1.13-1.897l8.932-8.931Zm0 0L19.5 7.125M18 14v4.75A2.25 2.25 0 0 1 15.75 21H5.25A2.25 2.25 0 0 1 3 18.75V8.25A2.25 2.25 0 0 1 5.25 6H10"/></svg>
<svg style="position:absolute;left:1780px;top:612.5px" width="20" height="20" viewBox="0 0 24 24" fill="none" stroke="#a1a1aa" stroke-width="1.5" stroke-linecap="round" stroke-linejoin="round"><path d="m20.25 7.5-.625 10.632a2.25 2.25 0 0 1-2.247 2.118H6.622a2.25 2.25 0 0 1-2.247-2.118L3.75 7.5m8.25 3v6.75m0 0-3-3m3 3 3-3M3.375 7.5h17.25c.621 0 1.125-.504 1.125-1.125v-1.5c0-.621-.504-1.125-1.125-1.125H3.375c-.621 0-1.125.504-1.125 1.125v1.5c0 .621.504 1.125 1.125 1.125Z"/></svg>
<svg style="position:absolute;left:1811.5px;top:612.3px" width="21" height="21" viewBox="0 0 24 24" fill="none" stroke="#ef4444" stroke-width="1.5" stroke-linecap="round" stroke-linejoin="round"><path d="M6 18 18 6M6 6l12 12"/></svg>
<svg style="position:absolute;left:1844px;top:612.5px" width="20" height="20" viewBox="0 0 24 24" fill="none" stroke="#ef4444" stroke-width="1.5" stroke-linecap="round" stroke-linejoin="round"><path d="m14.74 9-.346 9m-4.788 0L9.26 9m9.968-3.21c.342.052.682.107 1.022.166m-1.022-.165L18.16 19.673a2.25 2.25 0 0 1-2.244 2.077H8.084a2.25 2.25 0 0 1-2.244-2.077L4.772 5.79m14.456 0a48.108 48.108 0 0 0-3.478-.397m-12 .562c.34-.059.68-.114 1.022-.165m0 0a48.11 48.11 0 0 1 3.478-.397m7.5 0v-.916c0-1.18-.91-2.164-2.09-2.201a51.964 51.964 0 0 0-3.32 0c-1.18.037-2.09 1.022-2.09 2.201v.916m7.5 0a48.667 48.667 0 0 0-7.5 0"/></svg>
<div style="position:absolute;left:32px;top:708px;width:1856px;height:1px;background:#e4e4e7;"></div>
<div style="position:absolute;left:56px;top:672px;width:16px;height:16px;border-radius:4px;background:#fff;box-shadow:0 0 0 1px rgba(9,9,11,0.11),0 1px 2px rgba(0,0,0,0.05);"></div>
<div class="t" style="left:96.50px;top:673.83px;font-size:14.5px;-webkit-text-stroke:0.1px #09090b;color:#09090b;letter-spacing:0.084px;">05-17-2021</div>
<div style="position:absolute;left:395px;top:668px;width:44px;height:24px;background:#fafafa;border-radius:6px;box-shadow:inset 0 0 0 1px rgba(82,82,91,0.10);"></div>
<div class="t" style="left:403.20px;top:674.62px;font-size:12.5px;-webkit-text-stroke:0.3px #52525b;color:#52525b;letter-spacing:-0.023px;">male</div>
<div class="t" style="left:522.00px;top:673.73px;font-size:14.5px;color:#a1a1aa;">-</div>
<div class="t" style="left:746.30px;top:673.83px;font-size:14.5px;-webkit-text-stroke:0.1px #09090b;color:#09090b;letter-spacing:0.066px;">70-79</div>
<svg style="position:absolute;left:910px;top:668px" width="24" height="24" viewBox="0 0 24 24" fill="none" stroke="#ef4444" stroke-width="1.5" stroke-linecap="round" stroke-linejoin="round"><path d="m9.75 9.75 4.5 4.5m0-4.5-4.5 4.5M21 12a9 9 0 1 1-18 0 9 9 0 0 1 18 0Z"/></svg>
<div class="t" style="left:1031.00px;top:673.73px;font-size:14.5px;color:#a1a1aa;">-</div>
<div style="position:absolute;left:1224px;top:668px;width:89px;height:24px;background:#fffbeb;border-radius:6px;box-shadow:inset 0 0 0 1px rgba(217,119,6,0.14);"></div>
<div class="t" style="left:1232.40px;top:674.62px;font-size:12.5px;-webkit-text-stroke:0.3px #d97706;color:#d97706;letter-spacing:0.195px;">yellow (high)</div>
<svg style="position:absolute;left:1418px;top:668px" width="24" height="24" viewBox="0 0 24 24" fill="none" stroke="#ef4444" stroke-width="1.5" stroke-linecap="round" stroke-linejoin="round"><path d="m9.75 9.75 4.5 4.5m0-4.5-4.5 4.5M21 12a9 9 0 1 1-18 0 9 9 0 0 1 18 0Z"/></svg>
<div style="position:absolute;left:1587px;top:668px;width:24px;height:24px;background:#fafafa;border-radius:6px;box-shadow:inset 0 0 0 1px rgba(82,82,91,0.10);"></div>
<div class="t" style="left:1595.52px;top:674.62px;font-size:12.5px;-webkit-text-stroke:0.15px #3f3f46;color:#3f3f46;">0</div>
<svg style="position:absolute;left:1748px;top:669.5px" width="20" height="20" viewBox="0 0 24 24" fill="none" stroke="#a1a1aa" stroke-width="1.5" stroke-linecap="round" stroke-linejoin="round"><path d="m16.862 4.487 1.687-1.688a1.875 1.875 0 1 1 2.652 2.652L10.582 16.07a4.5 4.5 0 0 1-1.897 1.13L6 18l.8-2.685a4.5 4.5 0 0 1 1.13-1.897l8.932-8.931Zm0 0L19.5 7.125M18 14v4.75A2.25 2.25 0 0 1 15.75 21H5.25A2.25 2.25 0 0 1 3 18.75V8.25A2.25 2.25 0 0 1 5.25 6H10"/></svg>
<svg style="position:absolute;left:1780px;top:669.5px" width="20" height="20" viewBox="0 0 24 24" fill="none" stroke="#a1a1aa" stroke-width="1.5" stroke-linecap="round" stroke-linejoin="round"><path d="m20.25 7.5-.625 10.632a2.25 2.25 0 0 1-2.247 2.118H6.622a2.25 2.25 0 0 1-2.247-2.118L3.75 7.5m8.25 3v6.75m0 0-3-3m3 3 3-3M3.375 7.5h17.25c.621 0 1.125-.504 1.125-1.125v-1.5c0-.621-.504-1.125-1.125-1.125H3.375c-.621 0-1.125.504-1.125 1.125v1.5c0 .621.504 1.125 1.125 1.125Z"/></svg>
<svg style="position:absolute;left:1811.5px;top:669.3px" width="21" height="21" viewBox="0 0 24 24" fill="none" stroke="#ef4444" stroke-width="1.5" stroke-linecap="round" stroke-linejoin="round"><path d="M6 18 18 6M6 6l12 12"/></svg>
<svg style="position:absolute;left:1844px;top:669.5px" width="20" height="20" viewBox="0 0 24 24" fill="none" stroke="#ef4444" stroke-width="1.5" stroke-linecap="round" stroke-linejoin="round"><path d="m14.74 9-.346 9m-4.788 0L9.26 9m9.968-3.21c.342.052.682.107 1.022.166m-1.022-.165L18.16 19.673a2.25 2.25 0 0 1-2.244 2.077H8.084a2.25 2.25 0 0 1-2.244-2.077L4.772 5.79m14.456 0a48.108 48.108 0 0 0-3.478-.397m-12 .562c.34-.059.68-.114 1.022-.165m0 0a48.11 48.11 0 0 1 3.478-.397m7.5 0v-.916c0-1.18-.91-2.164-2.09-2.201a51.964 51.964 0 0 0-3.32 0c-1.18.037-2.09 1.022-2.09 2.201v.916m7.5 0a48.667 48.667 0 0 0-7.5 0"/></svg>
<div style="position:absolute;left:32px;top:765px;width:1856px;height:1px;background:#e4e4e7;"></div>
<div style="position:absolute;left:56px;top:729px;width:16px;height:16px;border-radius:4px;background:#fff;box-shadow:0 0 0 1px rgba(9,9,11,0.11),0 1px 2px rgba(0,0,0,0.05);"></div>
<div class="t" style="left:96.50px;top:730.83px;font-size:14.5px;-webkit-text-stroke:0.1px #09090b;color:#09090b;letter-spacing:0.084px;">05-17-2021</div>
<div style="position:absolute;left:395px;top:725px;width:44px;height:24px;background:#fafafa;border-radius:6px;box-shadow:inset 0 0 0 1px rgba(82,82,91,0.10);"></div>
<div class="t" style="left:403.20px;top:731.62px;font-size:12.5px;-webkit-text-stroke:0.3px #52525b;color:#52525b;letter-spacing:-0.023px;">male</div>
<div class="t" style="left:522.00px;top:730.73px;font-size:14.5px;color:#a1a1aa;">-</div>
<div class="t" style="left:746.30px;top:730.83px;font-size:14.5px;-webkit-text-stroke:0.1px #09090b;color:#09090b;letter-spacing:0.068px;">100-109</div>
<svg style="position:absolute;left:910px;top:725px" width="24" height="24" viewBox="0 0 24 24" fill="none" stroke="#ef4444" stroke-width="1.5" stroke-linecap="round" stroke-linejoin="round"><path d="m9.75 9.75 4.5 4.5m0-4.5-4.5 4.5M21 12a9 9 0 1 1-18 0 9 9 0 0 1 18 0Z"/></svg>
<div class="t" style="left:1031.00px;top:730.73px;font-size:14.5px;color:#a1a1aa;">-</div>
<div style="position:absolute;left:1224px;top:725px;width:34.6px;height:24px;background:#fef2f2;border-radius:6px;box-shadow:inset 0 0 0 1px rgba(220,38,38,0.14);"></div>
<div class="t" style="left:1232.40px;top:731.62px;font-size:12.5px;-webkit-text-stroke:0.3px #dc2626;color:#dc2626;letter-spacing:-0.121px;">red</div>
<svg style="position:absolute;left:1418px;top:725px" width="24" height="24" viewBox="0 0 24 24" fill="none" stroke="#ef4444" stroke-width="1.5" stroke-linecap="round" stroke-linejoin="round"><path d="m9.75 9.75 4.5 4.5m0-4.5-4.5 4.5M21 12a9 9 0 1 1-18 0 9 9 0 0 1 18 0Z"/></svg>
<div style="position:absolute;left:1587px;top:725px;width:24px;height:24px;background:#fafafa;border-radius:6px;box-shadow:inset 0 0 0 1px rgba(82,82,91,0.10);"></div>
<div class="t" style="left:1595.52px;top:731.62px;font-size:12.5px;-webkit-text-stroke:0.15px #3f3f46;color:#3f3f46;">0</div>
<svg style="position:absolute;left:1748px;top:726.5px" width="20" height="20" viewBox="0 0 24 24" fill="none" stroke="#a1a1aa" stroke-width="1.5" stroke-linecap="round" stroke-linejoin="round"><path d="m16.862 4.487 1.687-1.688a1.875 1.875 0 1 1 2.652 2.652L10.582 16.07a4.5 4.5 0 0 1-1.897 1.13L6 18l.8-2.685a4.5 4.5 0 0 1 1.13-1.897l8.932-8.931Zm0 0L19.5 7.125M18 14v4.75A2.25 2.25 0 0 1 15.75 21H5.25A2.25 2.25 0 0 1 3 18.75V8.25A2.25 2.25 0 0 1 5.25 6H10"/></svg>
<svg style="position:absolute;left:1780px;top:726.5px" width="20" height="20" viewBox="0 0 24 24" fill="none" stroke="#a1a1aa" stroke-width="1.5" stroke-linecap="round" stroke-linejoin="round"><path d="m20.25 7.5-.625 10.632a2.25 2.25 0 0 1-2.247 2.118H6.622a2.25 2.25 0 0 1-2.247-2.118L3.75 7.5m8.25 3v6.75m0 0-3-3m3 3 3-3M3.375 7.5h17.25c.621 0 1.125-.504 1.125-1.125v-1.5c0-.621-.504-1.125-1.125-1.125H3.375c-.621 0-1.125.504-1.125 1.125v1.5c0 .621.504 1.125 1.125 1.125Z"/></svg>
<svg style="position:absolute;left:1811.5px;top:726.3px" width="21" height="21" viewBox="0 0 24 24" fill="none" stroke="#ef4444" stroke-width="1.5" stroke-linecap="round" stroke-linejoin="round"><path d="M6 18 18 6M6 6l12 12"/></svg>
<svg style="position:absolute;left:1844px;top:726.5px" width="20" height="20" viewBox="0 0 24 24" fill="none" stroke="#ef4444" stroke-width="1.5" stroke-linecap="round" stroke-linejoin="round"><path d="m14.74 9-.346 9m-4.788 0L9.26 9m9.968-3.21c.342.052.682.107 1.022.166m-1.022-.165L18.16 19.673a2.25 2.25 0 0 1-2.244 2.077H8.084a2.25 2.25 0 0 1-2.244-2.077L4.772 5.79m14.456 0a48.108 48.108 0 0 0-3.478-.397m-12 .562c.34-.059.68-.114 1.022-.165m0 0a48.11 48.11 0 0 1 3.478-.397m7.5 0v-.916c0-1.18-.91-2.164-2.09-2.201a51.964 51.964 0 0 0-3.32 0c-1.18.037-2.09 1.022-2.09 2.201v.916m7.5 0a48.667 48.667 0 0 0-7.5 0"/></svg>
<div style="position:absolute;left:32px;top:822px;width:1856px;height:1px;background:#e4e4e7;"></div>
<div style="position:absolute;left:56px;top:786px;width:16px;height:16px;border-radius:4px;background:#fff;box-shadow:0 0 0 1px rgba(9,9,11,0.11),0 1px 2px rgba(0,0,0,0.05);"></div>
<div class="t" style="left:96.50px;top:787.83px;font-size:14.5px;-webkit-text-stroke:0.1px #09090b;color:#09090b;letter-spacing:0.084px;">05-17-2021</div>
<div style="position:absolute;left:395px;top:782px;width:44px;height:24px;background:#fafafa;border-radius:6px;box-shadow:inset 0 0 0 1px rgba(82,82,91,0.10);"></div>
<div class="t" style="left:403.20px;top:788.62px;font-size:12.5px;-webkit-text-stroke:0.3px #52525b;color:#52525b;letter-spacing:-0.023px;">male</div>
<div class="t" style="left:522.00px;top:787.73px;font-size:14.5px;color:#a1a1aa;">-</div>
<div class="t" style="left:746.30px;top:787.83px;font-size:14.5px;-webkit-text-stroke:0.1px #09090b;color:#09090b;letter-spacing:0.065px;">110-119</div>
<svg style="position:absolute;left:910px;top:782px" width="24" height="24" viewBox="0 0 24 24" fill="none" stroke="#ef4444" stroke-width="1.5" stroke-linecap="round" stroke-linejoin="round"><path d="m9.75 9.75 4.5 4.5m0-4.5-4.5 4.5M21 12a9 9 0 1 1-18 0 9 9 0 0 1 18 0Z"/></svg>
<div class="t" style="left:1031.00px;top:787.73px;font-size:14.5px;color:#a1a1aa;">-</div>
<div style="position:absolute;left:1224px;top:782px;width:34.6px;height:24px;background:#fef2f2;border-radius:6px;box-shadow:inset 0 0 0 1px rgba(220,38,38,0.14);"></div>
<div class="t" style="left:1232.40px;top:788.62px;font-size:12.5px;-webkit-text-stroke:0.3px #dc2626;color:#dc2626;letter-spacing:-0.121px;">red</div>
<svg style="position:absolute;left:1418px;top:782px" width="24" height="24" viewBox="0 0 24 24" fill="none" stroke="#ef4444" stroke-width="1.5" stroke-linecap="round" stroke-linejoin="round"><path d="m9.75 9.75 4.5 4.5m0-4.5-4.5 4.5M21 12a9 9 0 1 1-18 0 9 9 0 0 1 18 0Z"/></svg>
<div style="position:absolute;left:1587px;top:782px;width:24px;height:24px;background:#fafafa;border-radius:6px;box-shadow:inset 0 0 0 1px rgba(82,82,91,0.10);"></div>
<div class="t" style="left:1595.52px;top:788.62px;font-size:12.5px;-webkit-text-stroke:0.15px #3f3f46;color:#3f3f46;">0</div>
<svg style="position:absolute;left:1748px;top:783.5px" width="20" height="20" viewBox="0 0 24 24" fill="none" stroke="#a1a1aa" stroke-width="1.5" stroke-linecap="round" stroke-linejoin="round"><path d="m16.862 4.487 1.687-1.688a1.875 1.875 0 1 1 2.652 2.652L10.582 16.07a4.5 4.5 0 0 1-1.897 1.13L6 18l.8-2.685a4.5 4.5 0 0 1 1.13-1.897l8.932-8.931Zm0 0L19.5 7.125M18 14v4.75A2.25 2.25 0 0 1 15.75 21H5.25A2.25 2.25 0 0 1 3 18.75V8.25A2.25 2.25 0 0 1 5.25 6H10"/></svg>
<svg style="position:absolute;left:1780px;top:783.5px" width="20" height="20" viewBox="0 0 24 24" fill="none" stroke="#a1a1aa" stroke-width="1.5" stroke-linecap="round" stroke-linejoin="round"><path d="m20.25 7.5-.625 10.632a2.25 2.25 0 0 1-2.247 2.118H6.622a2.25 2.25 0 0 1-2.247-2.118L3.75 7.5m8.25 3v6.75m0 0-3-3m3 3 3-3M3.375 7.5h17.25c.621 0 1.125-.504 1.125-1.125v-1.5c0-.621-.504-1.125-1.125-1.125H3.375c-.621 0-1.125.504-1.125 1.125v1.5c0 .621.504 1.125 1.125 1.125Z"/></svg>
<svg style="position:absolute;left:1811.5px;top:783.3px" width="21" height="21" viewBox="0 0 24 24" fill="none" stroke="#ef4444" stroke-width="1.5" stroke-linecap="round" stroke-linejoin="round"><path d="M6 18 18 6M6 6l12 12"/></svg>
<svg style="position:absolute;left:1844px;top:783.5px" width="20" height="20" viewBox="0 0 24 24" fill="none" stroke="#ef4444" stroke-width="1.5" stroke-linecap="round" stroke-linejoin="round"><path d="m14.74 9-.346 9m-4.788 0L9.26 9m9.968-3.21c.342.052.682.107 1.022.166m-1.022-.165L18.16 19.673a2.25 2.25 0 0 1-2.244 2.077H8.084a2.25 2.25 0 0 1-2.244-2.077L4.772 5.79m14.456 0a48.108 48.108 0 0 0-3.478-.397m-12 .562c.34-.059.68-.114 1.022-.165m0 0a48.11 48.11 0 0 1 3.478-.397m7.5 0v-.916c0-1.18-.91-2.164-2.09-2.201a51.964 51.964 0 0 0-3.32 0c-1.18.037-2.09 1.022-2.09 2.201v.916m7.5 0a48.667 48.667 0 0 0-7.5 0"/></svg>
<div style="position:absolute;left:32px;top:879px;width:1856px;height:1px;background:#e4e4e7;"></div>
<div style="position:absolute;left:56px;top:843px;width:16px;height:16px;border-radius:4px;background:#fff;box-shadow:0 0 0 1px rgba(9,9,11,0.11),0 1px 2px rgba(0,0,0,0.05);"></div>
<div class="t" style="left:96.50px;top:844.83px;font-size:14.5px;-webkit-text-stroke:0.1px #09090b;color:#09090b;letter-spacing:0.084px;">05-17-2021</div>
<div style="position:absolute;left:395px;top:839px;width:44px;height:24px;background:#fafafa;border-radius:6px;box-shadow:inset 0 0 0 1px rgba(82,82,91,0.10);"></div>
<div class="t" style="left:403.20px;top:845.62px;font-size:12.5px;-webkit-text-stroke:0.3px #52525b;color:#52525b;letter-spacing:-0.023px;">male</div>
<div class="t" style="left:522.00px;top:844.73px;font-size:14.5px;color:#a1a1aa;">-</div>
<div class="t" style="left:746.30px;top:844.83px;font-size:14.5px;-webkit-text-stroke:0.1px #09090b;color:#09090b;letter-spacing:0.073px;">160+</div>
<svg style="position:absolute;left:910px;top:839px" width="24" height="24" viewBox="0 0 24 24" fill="none" stroke="#ef4444" stroke-width="1.5" stroke-linecap="round" stroke-linejoin="round"><path d="m9.75 9.75 4.5 4.5m0-4.5-4.5 4.5M21 12a9 9 0 1 1-18 0 9 9 0 0 1 18 0Z"/></svg>
<div class="t" style="left:1031.00px;top:844.73px;font-size:14.5px;color:#a1a1aa;">-</div>
<div style="position:absolute;left:1224px;top:839px;width:85px;height:24px;background:#fffbeb;border-radius:6px;box-shadow:inset 0 0 0 1px rgba(217,119,6,0.14);"></div>
<div class="t" style="left:1232.40px;top:845.62px;font-size:12.5px;-webkit-text-stroke:0.3px #d97706;color:#d97706;letter-spacing:0.176px;">yellow (low)</div>
<svg style="position:absolute;left:1418px;top:839px" width="24" height="24" viewBox="0 0 24 24" fill="none" stroke="#ef4444" stroke-width="1.5" stroke-linecap="round" stroke-linejoin="round"><path d="m9.75 9.75 4.5 4.5m0-4.5-4.5 4.5M21 12a9 9 0 1 1-18 0 9 9 0 0 1 18 0Z"/></svg>
<div style="position:absolute;left:1587px;top:839px;width:24px;height:24px;background:#fafafa;border-radius:6px;box-shadow:inset 0 0 0 1px rgba(82,82,91,0.10);"></div>
<div class="t" style="left:1595.52px;top:845.62px;font-size:12.5px;-webkit-text-stroke:0.15px #3f3f46;color:#3f3f46;">0</div>
<svg style="position:absolute;left:1748px;top:840.5px" width="20" height="20" viewBox="0 0 24 24" fill="none" stroke="#a1a1aa" stroke-width="1.5" stroke-linecap="round" stroke-linejoin="round"><path d="m16.862 4.487 1.687-1.688a1.875 1.875 0 1 1 2.652 2.652L10.582 16.07a4.5 4.5 0 0 1-1.897 1.13L6 18l.8-2.685a4.5 4.5 0 0 1 1.13-1.897l8.932-8.931Zm0 0L19.5 7.125M18 14v4.75A2.25 2.25 0 0 1 15.75 21H5.25A2.25 2.25 0 0 1 3 18.75V8.25A2.25 2.25 0 0 1 5.25 6H10"/></svg>
<svg style="position:absolute;left:1780px;top:840.5px" width="20" height="20" viewBox="0 0 24 24" fill="none" stroke="#a1a1aa" stroke-width="1.5" stroke-linecap="round" stroke-linejoin="round"><path d="m20.25 7.5-.625 10.632a2.25 2.25 0 0 1-2.247 2.118H6.622a2.25 2.25 0 0 1-2.247-2.118L3.75 7.5m8.25 3v6.75m0 0-3-3m3 3 3-3M3.375 7.5h17.25c.621 0 1.125-.504 1.125-1.125v-1.5c0-.621-.504-1.125-1.125-1.125H3.375c-.621 0-1.125.504-1.125 1.125v1.5c0 .621.504 1.125 1.125 1.125Z"/></svg>
<svg style="position:absolute;left:1811.5px;top:840.3px" width="21" height="21" viewBox="0 0 24 24" fill="none" stroke="#ef4444" stroke-width="1.5" stroke-linecap="round" stroke-linejoin="round"><path d="M6 18 18 6M6 6l12 12"/></svg>
<svg style="position:absolute;left:1844px;top:840.5px" width="20" height="20" viewBox="0 0 24 24" fill="none" stroke="#ef4444" stroke-width="1.5" stroke-linecap="round" stroke-linejoin="round"><path d="m14.74 9-.346 9m-4.788 0L9.26 9m9.968-3.21c.342.052.682.107 1.022.166m-1.022-.165L18.16 19.673a2.25 2.25 0 0 1-2.244 2.077H8.084a2.25 2.25 0 0 1-2.244-2.077L4.772 5.79m14.456 0a48.108 48.108 0 0 0-3.478-.397m-12 .562c.34-.059.68-.114 1.022-.165m0 0a48.11 48.11 0 0 1 3.478-.397m7.5 0v-.916c0-1.18-.91-2.164-2.09-2.201a51.964 51.964 0 0 0-3.32 0c-1.18.037-2.09 1.022-2.09 2.201v.916m7.5 0a48.667 48.667 0 0 0-7.5 0"/></svg>
<div style="position:absolute;left:32px;top:936px;width:1856px;height:1px;background:#e4e4e7;"></div>
<div style="position:absolute;left:56px;top:900px;width:16px;height:16px;border-radius:4px;background:#fff;box-shadow:0 0 0 1px rgba(9,9,11,0.11),0 1px 2px rgba(0,0,0,0.05);"></div>
<div class="t" style="left:96.50px;top:901.83px;font-size:14.5px;-webkit-text-stroke:0.1px #09090b;color:#09090b;letter-spacing:0.084px;">05-17-2021</div>
<div style="position:absolute;left:395px;top:896px;width:44px;height:24px;background:#fafafa;border-radius:6px;box-shadow:inset 0 0 0 1px rgba(82,82,91,0.10);"></div>
<div class="t" style="left:403.20px;top:902.62px;font-size:12.5px;-webkit-text-stroke:0.3px #52525b;color:#52525b;letter-spacing:-0.023px;">male</div>
<div class="t" style="left:522.00px;top:901.73px;font-size:14.5px;color:#a1a1aa;">-</div>
<div class="t" style="left:746.30px;top:901.83px;font-size:14.5px;-webkit-text-stroke:0.1px #09090b;color:#09090b;letter-spacing:0.065px;">110-119</div>
<svg style="position:absolute;left:910px;top:896px" width="24" height="24" viewBox="0 0 24 24" fill="none" stroke="#ef4444" stroke-width="1.5" stroke-linecap="round" stroke-linejoin="round"><path d="m9.75 9.75 4.5 4.5m0-4.5-4.5 4.5M21 12a9 9 0 1 1-18 0 9 9 0 0 1 18 0Z"/></svg>
<div class="t" style="left:1031.00px;top:901.73px;font-size:14.5px;color:#a1a1aa;">-</div>
<div style="position:absolute;left:1224px;top:896px;width:85px;height:24px;background:#fffbeb;border-radius:6px;box-shadow:inset 0 0 0 1px rgba(217,119,6,0.14);"></div>
<div class="t" style="left:1232.40px;top:902.62px;font-size:12.5px;-webkit-text-stroke:0.3px #d97706;color:#d97706;letter-spacing:0.176px;">yellow (low)</div>
<svg style="position:absolute;left:1418px;top:896px" width="24" height="24" viewBox="0 0 24 24" fill="none" stroke="#ef4444" stroke-width="1.5" stroke-linecap="round" stroke-linejoin="round"><path d="m9.75 9.75 4.5 4.5m0-4.5-4.5 4.5M21 12a9 9 0 1 1-18 0 9 9 0 0 1 18 0Z"/></svg>
<div style="position:absolute;left:1587px;top:896px;width:24px;height:24px;background:#fafafa;border-radius:6px;box-shadow:inset 0 0 0 1px rgba(82,82,91,0.10);"></div>
<div class="t" style="left:1595.52px;top:902.62px;font-size:12.5px;-webkit-text-stroke:0.15px #3f3f46;color:#3f3f46;">0</div>
<svg style="position:absolute;left:1748px;top:897.5px" width="20" height="20" viewBox="0 0 24 24" fill="none" stroke="#a1a1aa" stroke-width="1.5" stroke-linecap="round" stroke-linejoin="round"><path d="m16.862 4.487 1.687-1.688a1.875 1.875 0 1 1 2.652 2.652L10.582 16.07a4.5 4.5 0 0 1-1.897 1.13L6 18l.8-2.685a4.5 4.5 0 0 1 1.13-1.897l8.932-8.931Zm0 0L19.5 7.125M18 14v4.75A2.25 2.25 0 0 1 15.75 21H5.25A2.25 2.25 0 0 1 3 18.75V8.25A2.25 2.25 0 0 1 5.25 6H10"/></svg>
<svg style="position:absolute;left:1780px;top:897.5px" width="20" height="20" viewBox="0 0 24 24" fill="none" stroke="#a1a1aa" stroke-width="1.5" stroke-linecap="round" stroke-linejoin="round"><path d="m20.25 7.5-.625 10.632a2.25 2.25 0 0 1-2.247 2.118H6.622a2.25 2.25 0 0 1-2.247-2.118L3.75 7.5m8.25 3v6.75m0 0-3-3m3 3 3-3M3.375 7.5h17.25c.621 0 1.125-.504 1.125-1.125v-1.5c0-.621-.504-1.125-1.125-1.125H3.375c-.621 0-1.125.504-1.125 1.125v1.5c0 .621.504 1.125 1.125 1.125Z"/></svg>
<svg style="position:absolute;left:1811.5px;top:897.3px" width="21" height="21" viewBox="0 0 24 24" fill="none" stroke="#ef4444" stroke-width="1.5" stroke-linecap="round" stroke-linejoin="round"><path d="M6 18 18 6M6 6l12 12"/></svg>
<svg style="position:absolute;left:1844px;top:897.5px" width="20" height="20" viewBox="0 0 24 24" fill="none" stroke="#ef4444" stroke-width="1.5" stroke-linecap="round" stroke-linejoin="round"><path d="m14.74 9-.346 9m-4.788 0L9.26 9m9.968-3.21c.342.052.682.107 1.022.166m-1.022-.165L18.16 19.673a2.25 2.25 0 0 1-2.244 2.077H8.084a2.25 2.25 0 0 1-2.244-2.077L4.772 5.79m14.456 0a48.108 48.108 0 0 0-3.478-.397m-12 .562c.34-.059.68-.114 1.022-.165m0 0a48.11 48.11 0 0 1 3.478-.397m7.5 0v-.916c0-1.18-.91-2.164-2.09-2.201a51.964 51.964 0 0 0-3.32 0c-1.18.037-2.09 1.022-2.09 2.201v.916m7.5 0a48.667 48.667 0 0 0-7.5 0"/></svg>
<div class="t" style="left:56.40px;top:960.73px;font-size:14.5px;-webkit-text-stroke:0.2px #3f3f46;color:#3f3f46;letter-spacing:0.098px;">Showing 1 to 10 of 3,981 results</div>
<div style="position:absolute;left:887px;top:949px;width:145px;height:36px;border-radius:7px;background:#fff;box-shadow:0 0 0 1px rgba(9,9,11,0.10),0 1px 2px rgba(0,0,0,0.05);"></div>
<div style="position:absolute;left:970px;top:949px;width:1px;height:36px;background:#e4e4e7;"></div>
<div class="t" style="left:899.75px;top:960.73px;font-size:14.5px;-webkit-text-stroke:0.2px #71717a;color:#71717a;letter-spacing:-0.106px;">Per page</div>
<div class="t" style="left:983.75px;top:960.73px;font-size:14.5px;-webkit-text-stroke:0.1px #09090b;color:#09090b;letter-spacing:-0.813px;">10</div>
<svg style="position:absolute;left:1004px;top:956.4px" width="20" height="20" viewBox="0 0 20 20" fill="#71717a"><path fill-rule="evenodd" clip-rule="evenodd" d="M5.22 8.22a.75.75 0 0 1 1.06 0L10 11.94l3.72-3.72a.75.75 0 1 1 1.06 1.06l-4.25 4.25a.75.75 0 0 1-1.06 0L5.22 9.28a.75.75 0 0 1 0-1.06Z"/></svg>
<div style="position:absolute;left:1518px;top:949px;width:345px;height:36px;border-radius:7px;background:#fff;box-shadow:0 0 0 1px rgba(9,9,11,0.10),0 1px 2px rgba(0,0,0,0.05);"></div>
<div style="position:absolute;left:1518px;top:949px;width:36px;height:36px;background:#fafafa;border-radius:7px 0 0 7px;"></div>
<div style="position:absolute;left:1554px;top:949px;width:1px;height:36px;background:#e4e4e7;"></div>
<div style="position:absolute;left:1592px;top:949px;width:1px;height:36px;background:#e4e4e7;"></div>
<div style="position:absolute;left:1631px;top:949px;width:1px;height:36px;background:#e4e4e7;"></div>
<div style="position:absolute;left:1671px;top:949px;width:1px;height:36px;background:#e4e4e7;"></div>
<div style="position:absolute;left:1713px;top:949px;width:1px;height:36px;background:#e4e4e7;"></div>
<div style="position:absolute;left:1770px;top:949px;width:1px;height:36px;background:#e4e4e7;"></div>
<div style="position:absolute;left:1827px;top:949px;width:1px;height:36px;background:#e4e4e7;"></div>
<div class="t" style="left:1531.47px;top:960.73px;font-size:14.5px;-webkit-text-stroke:0.3px #c5410c;color:#c5410c;">1</div>
<div class="t" style="left:1568.97px;top:960.73px;font-size:14.5px;-webkit-text-stroke:0.3px #3f3f46;color:#3f3f46;">2</div>
<div class="t" style="left:1607.47px;top:960.73px;font-size:14.5px;-webkit-text-stroke:0.3px #3f3f46;color:#3f3f46;">3</div>
<div class="t" style="left:1646.97px;top:960.73px;font-size:14.5px;-webkit-text-stroke:0.3px #3f3f46;color:#3f3f46;">4</div>
<div class="t" style="left:1685.96px;top:960.73px;font-size:14.5px;-webkit-text-stroke:0.3px #3f3f46;color:#3f3f46;">...</div>
<div class="t" style="left:1729.40px;top:960.73px;font-size:14.5px;-webkit-text-stroke:0.3px #3f3f46;color:#3f3f46;">398</div>
<div class="t" style="left:1786.40px;top:960.73px;font-size:14.5px;-webkit-text-stroke:0.3px #3f3f46;color:#3f3f46;">399</div>
<svg style="position:absolute;left:1836px;top:957px" width="20" height="20" viewBox="0 0 20 20" fill="#a1a1aa"><path fill-rule="evenodd" clip-rule="evenodd" d="M8.22 5.22a.75.75 0 0 1 1.06 0l4.25 4.25a.75.75 0 0 1 0 1.06l-4.25 4.25a.75.75 0 0 1-1.06-1.06L11.94 10 8.22 6.28a.75.75 0 0 1 0-1.06Z"/></svg>
<svg style="position:absolute;left:0;top:0" width="1920" height="1029" viewBox="0 0 1920 1029">
<defs><filter id="sh" x="-10%" y="-50%" width="130%" height="250%"><feGaussianBlur stdDeviation="1.6"/></filter></defs>
<g transform="translate(2.5,3)" opacity="0.55" filter="url(#sh)" fill="#333" stroke="#333">
<line x1="1647" y1="127.3" x2="1796" y2="175" stroke-width="4.2"/>
<polygon points="1816,181.4 1796.2,166.8 1791.4,181.6" stroke="none"/>
</g>
<line x1="1647" y1="127.3" x2="1797" y2="175.3" stroke="#ff0000" stroke-width="4.2"/>
<polygon points="1816,181.4 1796.2,166.8 1791.4,181.6" fill="#ff0000"/>
<rect x="1830" y="188" width="66" height="53" fill="none" stroke="#ff0000" stroke-width="4"/>
</svg>
</body></html>
